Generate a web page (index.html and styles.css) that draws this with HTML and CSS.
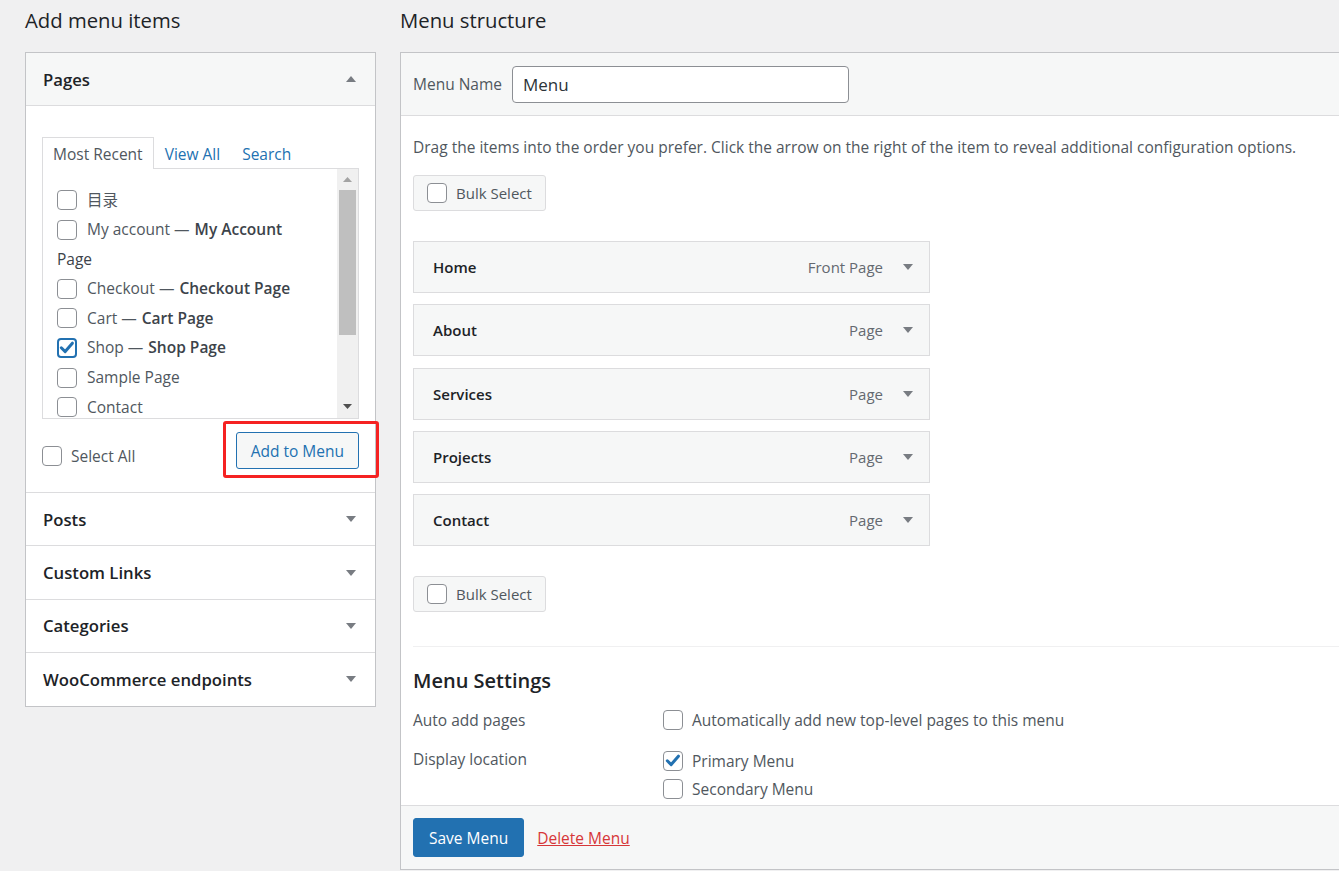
FILE: index.html
```html
<!DOCTYPE html>
<html>
<head>
    <meta name="viewport" content="width=device-width, initial-scale=1.0">
    <title>Menus</title>
    <link rel="stylesheet" href="styles.css">
</head>
<body>
    <div class="wrap">
        <!-- Coluna esquerda: adicionar itens -->
        <div class="col-left">
            <h2 class="col-title">Add menu items</h2>
            <div class="accordion">
                <div class="acc-section open">
                    <div class="acc-head">
                        <span>Pages</span>
                        <svg class="caret" width="10" height="6" viewBox="0 0 10 6"><polygon points="0,6 10,6 5,0"/></svg>
                    </div>
                    <div class="acc-body">
                        <ul class="tabs">
                            <li class="tab active">Most Recent</li>
                            <li class="tab">View All</li>
                            <li class="tab">Search</li>
                        </ul>
                        <div class="tab-panel">
                            <ul class="check-list">
                                <li><span class="cb"></span>目录</li>
                                <li><span class="cb"></span>My account — <b>My Account</b></li>
                                <li class="group-label">Page</li>
                                <li><span class="cb"></span>Checkout — <b>Checkout Page</b></li>
                                <li><span class="cb"></span>Cart — <b>Cart Page</b></li>
                                <li><span class="cb checked focus"><svg viewBox="0 0 20 20"><path d="M4.3 9.8 L8.2 13.6 L15.4 5.2"/></svg></span>Shop — <b>Shop Page</b></li>
                                <li><span class="cb"></span>Sample Page</li>
                                <li><span class="cb"></span>Contact</li>
                            </ul>
                            <div class="fake-scroll">
                                <span class="scroll-btn"><svg width="9" height="5" viewBox="0 0 9 5"><polygon points="0,5 9,5 4.5,0" fill="#a3a3a3"/></svg></span>
                                <span class="thumb"></span>
                                <span class="scroll-btn bottom"><svg width="9" height="5" viewBox="0 0 9 5"><polygon points="0,0 9,0 4.5,5" fill="#505050"/></svg></span>
                            </div>
                        </div>
                        <div class="select-row">
                            <label class="check-label select-all"><span class="cb"></span>Select All</label>
                            <span class="highlight"><button class="btn-secondary">Add to Menu</button></span>
                        </div>
                    </div>
                </div>
                <div class="acc-section">
                    <div class="acc-head"><span>Posts</span><svg class="caret" width="10" height="6" viewBox="0 0 10 6"><polygon points="0,0 10,0 5,6"/></svg></div>
                </div>
                <div class="acc-section">
                    <div class="acc-head"><span>Custom Links</span><svg class="caret" width="10" height="6" viewBox="0 0 10 6"><polygon points="0,0 10,0 5,6"/></svg></div>
                </div>
                <div class="acc-section">
                    <div class="acc-head"><span>Categories</span><svg class="caret" width="10" height="6" viewBox="0 0 10 6"><polygon points="0,0 10,0 5,6"/></svg></div>
                </div>
                <div class="acc-section">
                    <div class="acc-head"><span>WooCommerce endpoints</span><svg class="caret" width="10" height="6" viewBox="0 0 10 6"><polygon points="0,0 10,0 5,6"/></svg></div>
                </div>
            </div>
        </div>

        <!-- Coluna direita: estrutura do menu -->
        <div class="col-right">
            <h2 class="col-title">Menu structure</h2>
            <div class="menu-panel">
                <div class="menu-head">
                    <label class="name-label">Menu Name</label>
                    <input type="text" class="name-input" value="Menu">
                </div>
                <div class="menu-body">
                    <p class="hint">Drag the items into the order you prefer. Click the arrow on the right of the item to reveal additional configuration options.</p>
                    <label class="bulk-btn"><span class="cb"></span>Bulk Select</label>

                    <ul class="menu-items">
                        <li class="menu-item"><span class="item-title">Home</span><span class="item-type">Front Page</span><svg class="caret" width="10" height="6" viewBox="0 0 10 6"><polygon points="0,0 10,0 5,6"/></svg></li>
                        <li class="menu-item"><span class="item-title">About</span><span class="item-type">Page</span><svg class="caret" width="10" height="6" viewBox="0 0 10 6"><polygon points="0,0 10,0 5,6"/></svg></li>
                        <li class="menu-item"><span class="item-title">Services</span><span class="item-type">Page</span><svg class="caret" width="10" height="6" viewBox="0 0 10 6"><polygon points="0,0 10,0 5,6"/></svg></li>
                        <li class="menu-item"><span class="item-title">Projects</span><span class="item-type">Page</span><svg class="caret" width="10" height="6" viewBox="0 0 10 6"><polygon points="0,0 10,0 5,6"/></svg></li>
                        <li class="menu-item"><span class="item-title">Contact</span><span class="item-type">Page</span><svg class="caret" width="10" height="6" viewBox="0 0 10 6"><polygon points="0,0 10,0 5,6"/></svg></li>
                    </ul>

                    <label class="bulk-btn bulk-bottom"><span class="cb"></span>Bulk Select</label>

                    <div class="settings">
                        <h3 class="settings-title">Menu Settings</h3>
                        <div class="settings-grid">
                            <div class="settings-label">Auto add pages</div>
                            <div class="settings-opts">
                                <label class="check-label"><span class="cb"></span>Automatically add new top-level pages to this menu</label>
                            </div>
                            <div class="settings-label">Display location</div>
                            <div class="settings-opts locations">
                                <label class="check-label"><span class="cb checked"><svg viewBox="0 0 20 20"><path d="M4.3 9.8 L8.2 13.6 L15.4 5.2"/></svg></span>Primary Menu</label>
                                <label class="check-label"><span class="cb"></span>Secondary Menu</label>
                                <label class="check-label"><span class="cb"></span></label>
                            </div>
                        </div>
                    </div>
                </div>
                <div class="menu-foot">
                    <button class="btn-primary">Save Menu</button>
                    <a href="#" class="delete-link">Delete Menu</a>
                </div>
            </div>
        </div>
    </div>
</body>
</html>
```

FILE: styles.css
```css
:root {
    --page-bg: #f0f0f1;
    --panel-border: #c3c4c7;
    --line: #dcdcde;
    --soft-bg: #f6f7f7;
    --heading: #1d2327;
    --text: #50575e;
    --text-strong: #3c434a;
    --blue: #2271b1;
}

body {
    margin: 0;
    background: var(--page-bg);
    font-family: "Open Sans", "Noto Sans CJK SC", sans-serif;
    font-size: 15.5px;
    color: var(--text);
    overflow: hidden;
}

ul {
    list-style: none;
    margin: 0;
    padding: 0;
}

.wrap {
    display: flex;
    gap: 24px;
    padding-left: 25px;
    height: 871px;
    overflow: hidden;
}

.col-left {
    flex: 0 0 351px;
}

.col-right {
    flex: 0 0 980px;
}

.col-title {
    margin: 0 0 18px;
    padding-top: 6px;
    height: 28px;
    line-height: 28px;
    font-size: 20.3px;
    font-weight: 400;
    color: var(--heading);
}

/* checkbox */
.cb {
    flex: 0 0 auto;
    width: 20px;
    height: 20px;
    box-sizing: border-box;
    border: 1px solid #8c8f94;
    border-radius: 4px;
    background: #fff;
    display: inline-flex;
    align-items: center;
    justify-content: center;
}

.cb svg {
    width: 20px;
    height: 20px;
    flex: 0 0 auto;
    fill: none;
    stroke: var(--blue);
    stroke-width: 3;
    stroke-linecap: round;
    stroke-linejoin: round;
}

.cb.focus {
    border: 2px solid var(--blue);
}

.check-label {
    display: flex;
    align-items: center;
    gap: 9px;
}

.caret {
    fill: #787c82;
    flex: 0 0 auto;
}

/* accordion */
.accordion {
    background: #fff;
    border: 1px solid var(--panel-border);
}

.acc-head {
    display: flex;
    justify-content: space-between;
    align-items: center;
    height: 52.4px;
    padding: 0 19px 0 17px;
    border-bottom: 1px solid var(--line);
    font-size: 16.7px;
    font-weight: 600;
    color: var(--heading);
}

.acc-section:last-child .acc-head {
    border-bottom: none;
}

.acc-section.open .acc-head {
    background: var(--soft-bg);
    height: 52px;
}

.acc-body {
    padding: 31px 16px 23px;
    border-bottom: 1px solid var(--line);
}

.tabs {
    display: flex;
    height: 32px;
    margin-bottom: -1px;
    position: relative;
}

.tab {
    padding: 0 10px;
    line-height: 32px;
    border: 1px solid transparent;
    border-bottom: none;
    color: var(--blue);
}

.tab.active {
    background: #fff;
    border-color: var(--line);
    color: var(--text);
}

.tab-panel {
    display: flex;
    height: 251px;
    box-sizing: border-box;
    border: 1px solid var(--line);
}

.check-list {
    flex: 1;
    display: flex;
    flex-direction: column;
    gap: 9.6px;
    padding: 21px 14px 0;
    overflow: hidden;
}

.check-list li {
    flex: 0 0 20px;
    display: flex;
    align-items: center;
    gap: 10px;
    line-height: 17px;
    white-space: nowrap;
}

.check-list b {
    font-weight: 600;
    color: var(--text-strong);
    margin-left: -5px;
}

.check-list .group-label {
    color: var(--text-strong);
}

.fake-scroll {
    flex: 0 0 21px;
    background: #f0f0f0;
    display: flex;
    flex-direction: column;
    align-items: center;
}

.scroll-btn {
    height: 21px;
    display: flex;
    align-items: center;
    justify-content: center;
}

.scroll-btn.bottom {
    margin-top: auto;
    height: 24px;
}

.thumb {
    width: 17px;
    height: 145px;
    background: #bfbfbf;
}

.select-row {
    display: flex;
    justify-content: space-between;
    align-items: flex-start;
    margin-top: 13px;
}

.select-all {
    margin-top: 13px;
}

.highlight {
    position: relative;
}

.highlight::after {
    content: "";
    position: absolute;
    left: -13px;
    top: -11px;
    right: -20px;
    bottom: -9px;
    border: 3px solid #f52222;
    border-radius: 3px;
    pointer-events: none;
}

.btn-secondary {
    height: 37px;
    padding: 0 14px;
    background: var(--soft-bg);
    border: 1px solid var(--blue);
    border-radius: 3px;
    color: var(--blue);
    font-family: inherit;
    font-size: 15.5px;
    display: block;
}

/* menu structure */
.menu-panel {
    background: #fff;
    border-left: 1px solid var(--panel-border);
    border-top: 1px solid var(--panel-border);
    border-bottom: 1px solid var(--panel-border);
}

.menu-head {
    display: flex;
    align-items: center;
    height: 62px;
    padding-left: 12px;
    background: var(--soft-bg);
    border-bottom: 1px solid var(--line);
}

.name-label {
    margin-right: 10px;
}

.name-input {
    width: 337px;
    height: 37px;
    box-sizing: border-box;
    border: 1px solid #8c8f94;
    border-radius: 4px;
    padding: 0 10px;
    font-family: inherit;
    font-size: 17px;
    color: #2c3338;
}

.menu-body {
    height: 689px;
    box-sizing: border-box;
    padding-left: 12px;
    overflow: hidden;
}

.hint {
    margin: 20px 0 17px;
    line-height: 22px;
}

.bulk-btn {
    display: inline-flex;
    align-items: center;
    gap: 9px;
    height: 36px;
    box-sizing: border-box;
    padding: 0 13px;
    border: 1px solid var(--line);
    border-radius: 3px;
    background: var(--soft-bg);
    font-size: 15px;
}

.menu-items {
    width: 517px;
    margin: 30px 0;
    display: flex;
    flex-direction: column;
    gap: 11.25px;
}

.menu-item {
    display: flex;
    align-items: center;
    height: 52px;
    box-sizing: border-box;
    padding: 0 16px 0 19px;
    border: 1px solid var(--line);
    background: var(--soft-bg);
    font-size: 15px;
}

.item-title {
    flex: 1;
    font-weight: 600;
    color: var(--heading);
}

.item-type {
    color: #646970;
    margin-right: 20px;
}

.settings {
    margin-top: 34px;
    border-top: 1px solid #f0f0f1;
}

.settings-title {
    margin: 20px 0 14px;
    font-size: 20px;
    line-height: 28px;
    font-weight: 600;
    color: var(--heading);
}

.settings-grid {
    display: grid;
    grid-template-columns: 250px 1fr;
    row-gap: 17px;
    line-height: 22px;
}

.locations {
    display: flex;
    flex-direction: column;
    gap: 6px;
    padding-top: 2px;
}

.menu-foot {
    display: flex;
    align-items: center;
    gap: 13px;
    height: 63px;
    padding-left: 12px;
    background: var(--soft-bg);
    border-top: 1px solid var(--line);
}

.btn-primary {
    height: 39px;
    padding: 0 15px;
    background: var(--blue);
    border: 1px solid var(--blue);
    border-radius: 3px;
    color: #fff;
    font-family: inherit;
    font-size: 15.5px;
}

.delete-link {
    color: #d63638;
    text-decoration: underline;
}
```
